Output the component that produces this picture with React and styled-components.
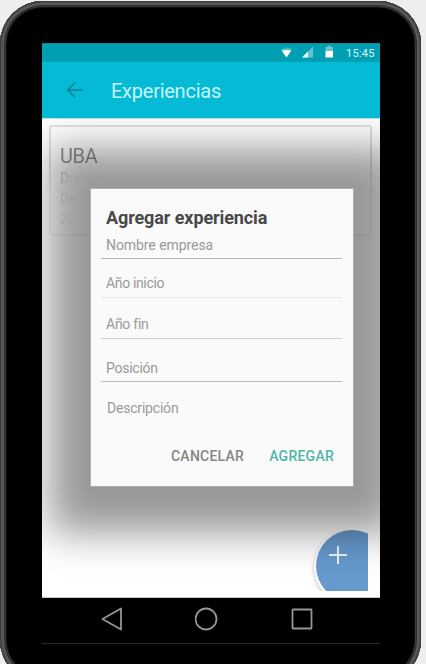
import React from "react";
import styled, { createGlobalStyle } from "styled-components";

const Global = createGlobalStyle`
  * { box-sizing: border-box; }
  html, body { margin: 0; height: 664px; overflow: hidden; background: #eeeeef; }
  body { font-family: Roboto, "Liberation Sans", sans-serif; }
`;

const Viewport = styled.div`
  width: 426px;
  height: 664px;
  overflow: hidden;
`;

const Device = styled.div`
  width: 421px;
  height: 682px;
  margin-top: 1px;
  padding: 42px 41px 39px 42px;
  border-radius: 43px;
  background: #000;
  box-shadow: inset 0 0 0 1px #3c3d3e, inset 0 0 0 2px #4c4e50, inset 0 0 0 4px #58595c,
    inset 0 0 0 5px #2b2c2d, inset 0 0 0 6px #38393a, inset 0 0 1px 7px #111;
`;

const Screen = styled.div`
  width: 338px;
  height: 601px;
  display: flex;
  flex-direction: column;
  border-bottom: 1px solid #292929;
`;

const StatusBar = styled.header`
  height: 19px;
  display: flex;
  align-items: center;
  justify-content: flex-end;
  padding-right: 5px;
  background: #029fb3;
  border-top: 1px solid #0b8796;
`;

const StatusIcons = styled.svg`
  display: block;
  margin-right: 10px;
`;

const Clock = styled.span`
  font-size: 11px;
  line-height: 18px;
  letter-spacing: 0.25px;
  color: #d9f7fb;
  width: 29px;
  padding-top: 1px;
  white-space: nowrap;
`;

const AppBar = styled.div`
  height: 56px;
  display: flex;
  align-items: center;
  padding-left: 24px;
  gap: 27px;
  background: #04bad4;
`;

const BarTitle = styled.h1`
  margin: 2px 0 0;
  font-size: 20px;
  line-height: 24px;
  font-weight: 400;
  letter-spacing: -0.25px;
  color: #c5f5fa;
`;

const Content = styled.main`
  position: relative;
  height: 480px;
  padding: 7px;
  overflow: hidden;
  background: #fff;
  box-shadow: inset 0 1px 1px #b8e4ea;
  border-bottom: 1px solid #c4c4c4;
`;

const Card = styled.article`
  width: 323px;
  height: 111px;
  padding: 17px 9px;
  border: 2px solid #e0e0e0;
  border-radius: 2px;
  mask-image: linear-gradient(180deg, #000 30%, rgba(0, 0, 0, 0.35) 65%);
`;

const CardTitle = styled.h2`
  margin: 0;
  font-size: 20px;
  line-height: 24px;
  font-weight: 400;
  letter-spacing: -0.4px;
  color: #949494;
`;

const CardLine = styled.p`
  margin: 0;
  width: 60px;
  font-size: 14px;
  line-height: 20.5px;
  color: #b8b8b8;
  mask-image: linear-gradient(90deg, #000, rgba(0, 0, 0, 0.25) 22%, transparent);
`;

const FabSlot = styled.div`
  position: absolute;
  right: 12px;
  bottom: 6px;
  width: 66px;
  height: 66px;
  overflow: hidden;
`;

const Fab = styled.button`
  position: absolute;
  left: 14px;
  top: 5px;
  width: 72px;
  height: 72px;
  padding: 16px 0 0 12px;
  display: flex;
  align-items: flex-start;
  border: 0;
  border-radius: 50%;
  background: #6699cc;
  box-shadow: -1px 1px 0 1px #fff, -2px 3px 4px 0 rgba(0, 0, 0, 0.25);
`;

const Dialog = styled.form`
  position: absolute;
  left: 49px;
  top: 71px;
  width: 262px;
  height: 297px;
  padding: 18px 11px 0 10px;
  display: flex;
  flex-direction: column;
  background: #fafafa;
  box-shadow: 0 0 0 1px rgba(255, 255, 255, 0.2), 3px 3px 38px 44px rgba(0, 0, 0, 0.405);
`;

const DialogTitle = styled.h2`
  margin: 0 0 0 5px;
  font-size: 18px;
  line-height: 22px;
  font-weight: 700;
  letter-spacing: -0.1px;
  color: #484848;
`;

const Field = styled.label`
  height: ${(p) => p.$height}px;
  padding: 0 0 ${(p) => p.$gap}px ${(p) => p.$indent || 5}px;
  display: flex;
  align-items: flex-end;
  flex-shrink: 0;
  font-size: 14px;
  line-height: 18px;
  letter-spacing: ${(p) => p.$spacing};
  color: #999;
  border-bottom: 1px solid ${(p) => p.$line};
`;

const Actions = styled.div`
  display: flex;
  justify-content: flex-end;
  gap: 25px;
  margin-top: 29px;
  padding-right: 8px;
`;

const Action = styled.button`
  border: 0;
  padding: 0;
  background: none;
  font: 500 14px/18px Roboto, "Liberation Sans", sans-serif;
  letter-spacing: 0.25px;
  color: ${(p) => p.$color};
`;

const NavBar = styled.nav`
  height: 45px;
  background: #000;
  display: flex;
  align-items: flex-start;
  padding: 9px 0 0 59px;
  gap: 70px;
`;

const NavIcon = styled.svg`
  display: block;
  width: 24px;
  height: 24px;
  fill: none;
  stroke: #969696;
  stroke-width: 1.8;
  stroke-linejoin: round;
  margin-right: ${(p) => p.$after || 0}px;
`;

const fields = [
  { label: "Nombre empresa", height: 30, gap: 4, line: "#b3b3b3", spacing: "-0.07px" },
  { label: "Año inicio", height: 39, gap: 5, line: "#eaeaea", spacing: "-0.35px" },
  { label: "Año fin", height: 41, gap: 5, line: "#cfcfcf", spacing: "-0.25px" },
  { label: "Posición", height: 43, gap: 4, line: "#bdbdbd", spacing: "-0.25px" },
  { label: "Descripción", height: 36, gap: 0, line: "transparent", indent: 6, spacing: "-0.2px" },
];

export default function App() {
  return (
    <Viewport>
      <Global />
      <Device>
        <Screen>
          <StatusBar>
            <StatusIcons width="56" height="16" viewBox="0 0 56 16">
              <path d="M1 4.500Q6.500 .5 12 4.500L6.500 12Z" fill="#45b5c4" />
              <path d="M1.800 5.800Q6.500 3.500 11.200 5.800L6.500 12.500Z" fill="#fff" />
              <path d="M22 12.500 33 1.500V12.500Z" fill="#63c2ce" />
              <path d="M22 12.500 28 6.500V12.500Z" fill="#f2fcfd" />
              <path d="M45.500 2h2V.8h3.500V2h2v4h-7.500Z" fill="#68c5d0" />
              <path d="M45.500 6H53v6.500h-7.500Z" fill="#fff" />
            </StatusIcons>
            <Clock>15:45</Clock>
          </StatusBar>
          <AppBar>
            <svg width="18" height="18" viewBox="0 0 18 18" fill="none" stroke="#0a7f91" strokeWidth="1.500">
              <path d="M16.800 9H2M9 1.800 1.800 9 9 16.200" />
            </svg>
            <BarTitle>Experiencias</BarTitle>
          </AppBar>
          <Content>
            <Card>
              <CardTitle>UBA</CardTitle>
              <CardLine>Docente</CardLine>
              <CardLine>De</CardLine>
              <CardLine>20</CardLine>
            </Card>
            <FabSlot>
              <Fab type="button" aria-label="Agregar">
                <svg width="20" height="18" viewBox="0 0 20 18" stroke="#eef3f9" strokeWidth="2">
                  <path d="M10 0V18M1 9H19" />
                </svg>
              </Fab>
            </FabSlot>
            <Dialog>
              <DialogTitle>Agregar experiencia</DialogTitle>
              {fields.map((f) => (
                <Field
                  key={f.label}
                  $height={f.height}
                  $gap={f.gap}
                  $line={f.line}
                  $indent={f.indent}
                  $spacing={f.spacing}
                >
                  {f.label}
                </Field>
              ))}
              <Actions>
                <Action type="button" $color="#858585">CANCELAR</Action>
                <Action type="button" $color="#4db6a8">AGREGAR</Action>
              </Actions>
            </Dialog>
          </Content>
          <NavBar>
            <NavIcon viewBox="0 0 24 24"><path d="M20 1.500V22.500L1.500 12Z" /></NavIcon>
            <NavIcon viewBox="0 0 24 24" $after={2}><circle cx="11" cy="12" r="10.500" /></NavIcon>
            <NavIcon viewBox="0 0 24 24"><rect x="1.500" y="2.500" width="19" height="19" rx=".5" /></NavIcon>
          </NavBar>
        </Screen>
      </Device>
    </Viewport>
  );
}
